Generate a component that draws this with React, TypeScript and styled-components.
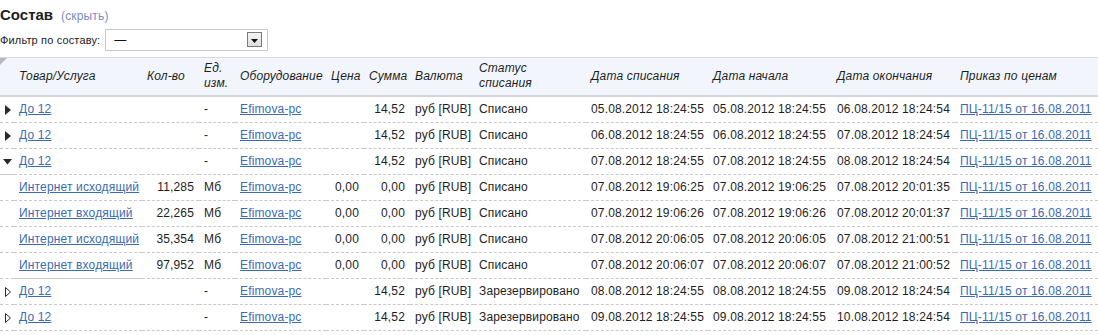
import React from "react";
import styled, { createGlobalStyle } from "styled-components";

const Global = createGlobalStyle`
  html, body { margin: 0; padding: 0; background: #fff; }
  body { font-family: "Liberation Sans", Arial, sans-serif; font-size: 12px; color: #222; letter-spacing: 0.15px; }
`;

const Page = styled.div`
  width: 1098px;
`;

const TitleRow = styled.div`
  display: flex;
  align-items: baseline;
  padding-top: 5px;
  line-height: 20px;
`;

const Title = styled.span`
  font-size: 15px;
  font-weight: bold;
  color: #1e1e1e;
  letter-spacing: 0;
`;

const HideLink = styled.span`
  margin-left: 8px;
  font-size: 12px;
  color: #7a8dc4;
  cursor: pointer;
`;

const FilterRow = styled.div`
  display: flex;
  align-items: center;
  margin-top: 2px;
  height: 23px;
`;

const FilterLabel = styled.span`
  font-size: 11px;
  color: #222;
`;

const Select = styled.div`
  margin-left: 5px;
  width: 163px;
  height: 22px;
  box-sizing: border-box;
  border: 1px solid #c9c9c9;
  background: #fff;
  display: flex;
  align-items: center;
  justify-content: space-between;
  padding: 0 5px 0 8px;
`;

const SelectValue = styled.span`
  font-size: 12px;
  color: #111;
`;

const SelectButton = styled.span`
  width: 15px;
  height: 15px;
  box-sizing: border-box;
  border: 1px solid #7a7a7a;
  background: linear-gradient(#f4f4f4, #dedede);
  display: flex;
  align-items: center;
  justify-content: center;
  padding-top: 2px;
`;

const Table = styled.table`
  margin-top: 6px;
  width: 1098px;
  table-layout: fixed;
  border-collapse: separate;
  border-spacing: 0;
`;

const HeadCell = styled.th<{ $corner?: boolean }>`
  position: relative;
  background: #f2f6fc;
  border-top: 1px solid #d5dae2;
  border-bottom: 2px solid #d2d5da;
  padding: 3px 5px 4px 5px;
  height: 30px;
  line-height: 15px;
  font-weight: normal;
  font-style: italic;
  text-align: left;
  vertical-align: middle;
  color: #1e1e1e;
  white-space: normal;
  &::before {
    content: "";
    display: ${(p) => (p.$corner ? "block" : "none")};
    position: absolute;
    left: 0;
    top: 0;
    width: 0;
    height: 0;
    border-top: 7px solid #b9b9b9;
    border-right: 7px solid transparent;
  }
`;

const Cell = styled.td<{ $right?: boolean; $solid?: boolean; $toggle?: boolean }>`
  padding: ${(p) => (p.$toggle ? "6px 0 6px 3px" : "6px 5px")};
  line-height: 13px;
  text-align: ${(p) => (p.$right ? "right" : "left")};
  border-bottom: 1px ${(p) => (p.$solid ? "solid" : "dashed")} #c9c9c9;
  white-space: nowrap;
  overflow: hidden;
  color: #1e1e1e;
  vertical-align: middle;
`;

const Link = styled.a`
  color: #3a6bb3;
  text-decoration: underline;
  cursor: pointer;
`;

const Toggle = styled.svg`
  display: block;
`;

type ToggleKind = "closed" | "open" | "hollow" | "none";

interface Row {
  toggle: ToggleKind;
  name: string;
  qty: string;
  unit: string;
  price: string;
  sum: string;
  status: string;
  d1: string;
  d2: string;
  d3: string;
  solidToggle?: boolean;
  solidName?: boolean;
}

const parent = (
  toggle: ToggleKind,
  status: string,
  d1: string,
  d2: string,
  d3: string,
  solidToggle = false
): Row => ({
  toggle,
  name: "До 12",
  qty: "",
  unit: "-",
  price: "",
  sum: "14,52",
  status,
  d1,
  d2,
  d3,
  solidToggle,
});

const child = (name: string, qty: string, d1: string, d3: string, solidName = false): Row => ({
  toggle: "none",
  name,
  qty,
  unit: "Мб",
  price: "0,00",
  sum: "0,00",
  status: "Списано",
  d1,
  d2: d1,
  d3,
  solidName,
});

const rows: Row[] = [
  parent("closed", "Списано", "05.08.2012 18:24:55", "05.08.2012 18:24:55", "06.08.2012 18:24:54"),
  parent("closed", "Списано", "06.08.2012 18:24:55", "06.08.2012 18:24:55", "07.08.2012 18:24:54"),
  parent("open", "Списано", "07.08.2012 18:24:55", "07.08.2012 18:24:55", "08.08.2012 18:24:54", true),
  child("Интернет исходящий", "11,285", "07.08.2012 19:06:25", "07.08.2012 20:01:35"),
  child("Интернет входящий", "22,265", "07.08.2012 19:06:26", "07.08.2012 20:01:37"),
  child("Интернет исходящий", "35,354", "07.08.2012 20:06:05", "07.08.2012 21:00:51"),
  child("Интернет входящий", "97,952", "07.08.2012 20:06:07", "07.08.2012 21:00:52", true),
  parent("hollow", "Зарезервировано", "08.08.2012 18:24:55", "08.08.2012 18:24:55", "09.08.2012 18:24:54"),
  parent("hollow", "Зарезервировано", "09.08.2012 18:24:55", "09.08.2012 18:24:55", "10.08.2012 18:24:54"),
];

const ToggleIcon: React.FC<{ kind: ToggleKind }> = ({ kind }) => {
  if (kind === "none") return null;
  if (kind === "open") {
    return (
      <Toggle width="10" height="6" viewBox="0 0 10 6">
        <path d="M0 0 H9 L4.5 5.5 Z" fill="#2a2a2a" />
      </Toggle>
    );
  }
  if (kind === "hollow") {
    return (
      <Toggle width="10" height="10" viewBox="0 0 10 10" style={{ marginLeft: 2 }}>
        <path d="M0.5 0.5 L5.5 5 L0.5 9.5 Z" fill="none" stroke="#2a2a2a" strokeWidth="1" />
      </Toggle>
    );
  }
  return (
    <Toggle width="10" height="10" viewBox="0 0 10 10" style={{ marginLeft: 2 }}>
      <path d="M0 0 L6 5 L0 10 Z" fill="#2a2a2a" />
    </Toggle>
  );
};

const widths = [14, 128, 57, 36, 91, 38, 46, 64, 112, 122, 124, 123];

export default function App() {
  return (
    <Page>
      <Global />
      <TitleRow>
        <Title>Состав</Title>
        <HideLink>(скрыть)</HideLink>
      </TitleRow>
      <FilterRow>
        <FilterLabel>Фильтр по составу:</FilterLabel>
        <Select>
          <SelectValue>—</SelectValue>
          <SelectButton>
            <svg width="7" height="4" viewBox="0 0 7 4">
              <path d="M0 0 H7 L3.5 4 Z" fill="#111" />
            </svg>
          </SelectButton>
        </Select>
      </FilterRow>
      <Table>
        <colgroup>
          {widths.map((w, i) => (
            <col key={i} style={{ width: w }} />
          ))}
          <col />
        </colgroup>
        <thead>
          <tr>
            <HeadCell $corner />
            <HeadCell>Товар/Услуга</HeadCell>
            <HeadCell>Кол-во</HeadCell>
            <HeadCell>Ед. изм.</HeadCell>
            <HeadCell>Оборудование</HeadCell>
            <HeadCell>Цена</HeadCell>
            <HeadCell>Сумма</HeadCell>
            <HeadCell>Валюта</HeadCell>
            <HeadCell>
              Статус
              <br />
              списания
            </HeadCell>
            <HeadCell>Дата списания</HeadCell>
            <HeadCell>Дата начала</HeadCell>
            <HeadCell>Дата окончания</HeadCell>
            <HeadCell>Приказ по ценам</HeadCell>
          </tr>
        </thead>
        <tbody>
          {rows.map((r, i) => (
            <tr key={i}>
              <Cell $toggle $solid={r.solidToggle}>
                <ToggleIcon kind={r.toggle} />
              </Cell>
              <Cell $solid={r.solidName}>
                <Link>{r.name}</Link>
              </Cell>
              <Cell $right>{r.qty}</Cell>
              <Cell>{r.unit}</Cell>
              <Cell>
                <Link>Efimova-pc</Link>
              </Cell>
              <Cell $right>{r.price}</Cell>
              <Cell $right>{r.sum}</Cell>
              <Cell>руб [RUB]</Cell>
              <Cell>{r.status}</Cell>
              <Cell>{r.d1}</Cell>
              <Cell>{r.d2}</Cell>
              <Cell>{r.d3}</Cell>
              <Cell>
                <Link>ПЦ-11/15 от 16.08.2011</Link>
              </Cell>
            </tr>
          ))}
        </tbody>
      </Table>
    </Page>
  );
}
